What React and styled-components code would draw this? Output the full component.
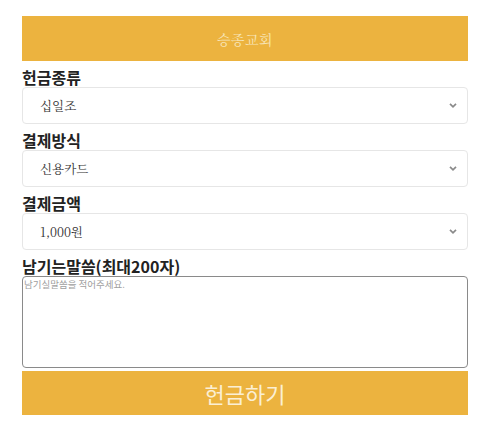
import React from "react";
import styled, { createGlobalStyle } from "styled-components";

const Global = createGlobalStyle`
  html, body { margin: 0; padding: 0; background: #fff; }
  body { font-family: "Noto Sans CJK KR", "Noto Sans", sans-serif; }
  * { box-sizing: border-box; }
`;

const Page = styled.div`
  width: 480px;
  padding: 16px 12px 0 22px;
  display: flex;
  flex-direction: column;
`;

const Column = styled.div`
  width: 446px;
  display: flex;
  flex-direction: column;
`;

const Header = styled.div`
  height: 45px;
  background: #ecb33f;
  display: flex;
  align-items: center;
  justify-content: center;
  color: #f7e4b6;
  font-family: "Noto Serif CJK KR", "Liberation Serif", serif;
  font-size: 14px;
  letter-spacing: 0.5px;
`;

const Label = styled.div`
  font-family: "Noto Sans CJK KR", sans-serif;
  font-weight: 700;
  font-size: 16px;
  line-height: 19px;
  color: #222;
  margin-top: ${(p) => p.$top}px;
  height: 19px;
`;

const SelectBox = styled.div`
  height: 37px;
  border: 1px solid #e6e6e6;
  border-radius: 4px;
  display: flex;
  align-items: center;
  justify-content: space-between;
  padding: 0 9px 0 17px;
  font-family: "Noto Serif CJK KR", "Liberation Serif", serif;
  font-size: 12.5px;
  color: #333;
  background: #fff;
`;

const Chevron = () => (
  <svg width="10" height="7" viewBox="0 0 10 7">
    <path d="M2 1.8 L5 4.8 L8 1.8" fill="none" stroke="#8a8a8a" strokeWidth="1.7" />
  </svg>
);

const TextArea = styled.div`
  height: 92px;
  border: 1px solid #8a8a8a;
  border-radius: 4px;
  padding: 1px 1px 0;
  font-size: 9.5px;
  line-height: 12px;
  color: #a0a0a0;
  font-family: "Noto Sans CJK KR", sans-serif;
`;

const Button = styled.div`
  margin-top: 3px;
  height: 44px;
  background: #ecb33f;
  color: #fbefd4;
  font-family: "Noto Sans CJK KR", sans-serif;
  font-size: 22px;
  display: flex;
  align-items: center;
  justify-content: center;
`;

const selects = [
  { label: "헌금종류", value: "십일조", top: 7 },
  { label: "결제방식", value: "신용카드", top: 7 },
  { label: "결제금액", value: "1,000원", top: 7 },
];

export default function App() {
  return (
    <>
      <Global />
      <Page>
        <Column>
          <Header>승종교회</Header>
          {selects.map((s) => (
            <React.Fragment key={s.label}>
              <Label $top={s.top}>{s.label}</Label>
              <SelectBox>
                <span>{s.value}</span>
                <Chevron />
              </SelectBox>
            </React.Fragment>
          ))}
          <Label $top={7}>남기는말씀(최대200자)</Label>
          <TextArea>남기실말씀을 적어주세요.</TextArea>
          <Button>헌금하기</Button>
        </Column>
      </Page>
    </>
  );
}
